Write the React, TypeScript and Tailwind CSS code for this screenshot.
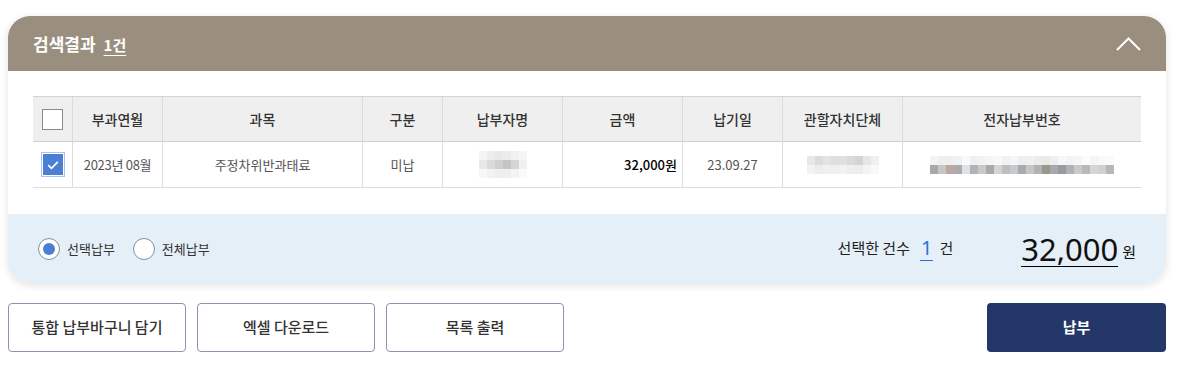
const cols = "grid grid-cols-[39px_90px_200px_80px_120px_120px_100px_120px_239px]";

const headers = ["부과연월", "과목", "구분", "납부자명", "금액", "납기일", "관할자치단체", "전자납부번호"];

// pixelated blur, like the masked personal data in the screenshot
function Masked({ rows }: { rows: string[][] }) {
    return (
        <div className="flex flex-col blur-[0.6px]">
            {rows.map((r, i) => (
                <div key={i} className="flex">
                    {r.map((c, j) => (
                        <div key={j} className="w-[8px] h-[9px]" style={{ background: c }} />
                    ))}
                </div>
            ))}
        </div>
    );
}

const nameMask = [
    ["#f4f4f5", "#ededee", "#e9e9ea", "#ececed", "#f1f1f2", "#f6f6f7"],
    ["#e8e8e9", "#dadadb", "#cfcfd0", "#c6c3c1", "#d6d6d8", "#eef0f2"],
    ["#f7f7f7", "#f2f2f3", "#eeeeee", "#efefef", "#f4f4f5", "#fafafa"],
];

const orgMask = [
    ["#e8e8ea", "#dcdcde", "#e4e4e6", "#dedee0", "#e2e0df", "#dadadb", "#d4d4d6", "#e6e6e8", "#f0f0f1"],
    ["#f3f3f4", "#eeeef0", "#f1f1f2", "#efefef", "#f2f2f3", "#eeeeef", "#ededee", "#f4f4f5", "#f8f8f8"],
];

const numMask = [
    ["#f3f3f4", "#efeff0", "#eeeeef", "#f1f1f2", "#fafafa", "#eff0f1", "#f2f2f3", "#f5f5f6", "#f7f8f8", "#f1f1f2", "#f5f5f5", "#eeeeef", "#f0f0f0", "#ececed", "#e9e9ea", "#eeeeef", "#f7f7f7", "#f3f3f4", "#f6f6f6", "#fbfbfb", "#f5f5f6", "#f9f9f9", "#fbfbfb"],
    ["#a9a8a9", "#c9c5c5", "#bba8a3", "#acaaab", "#dee2e4", "#b1b4b6", "#cdc8c7", "#a7a9ad", "#d8d3d0", "#bcbec0", "#c4cbce", "#a9acae", "#cac5c2", "#b0b2b3", "#98998e", "#a7aaad", "#999b9f", "#b0b3b5", "#c7c9cb", "#b9b9ba", "#d5d6d7", "#cfd0d1", "#b7b7b8"],
];

export default function App() {
    return (
        <div className="w-[1187px] h-[367px] bg-white font-['Noto_Sans_CJK_KR','Noto_Sans',sans-serif] text-[#333]">
            <div className="ml-2 pt-4 w-[1158px]">
                {/* Result card */}
                <div className="rounded-[22px] overflow-hidden shadow-[0_2px_8px_rgba(0,0,0,0.12)] bg-white">
                    {/* Header */}
                    <div className="h-[55px] bg-[#9a8f7e] flex items-center justify-between pl-[25px] pr-[25px]">
                        <div className="flex items-baseline gap-2 text-white">
                            <span className="text-[17px] font-bold">검색결과</span>
                            <span className="text-[15px] font-bold underline underline-offset-[4px]">1건</span>
                        </div>
                        <svg viewBox="0 0 25 14" className="w-[25px] h-[14px]">
                            <path d="M1 13 L12.5 1.5 L24 13" fill="none" stroke="white" strokeWidth="2" />
                        </svg>
                    </div>

                    {/* Table */}
                    <div className="px-[25px] pt-[25px] pb-[26px]">
                        <div className="border-t border-[#d2d2d2]">
                            <div className={`${cols} h-[45px] bg-[#efefef] border-b border-[#cfcfcf] text-[14px] font-medium text-[#333]`}>
                                <div className="flex items-center justify-center">
                                    <div className="w-[21px] h-[21px] bg-white border border-[#8a8a8a]" />
                                </div>
                                {headers.map((h) => (
                                    <div key={h} className="flex items-center justify-center border-l border-[#dcdcdc]">
                                        {h}
                                    </div>
                                ))}
                            </div>
                            <div className={`${cols} h-[46px] border-b border-[#dcdcdc] text-[13px] text-[#555]`}>
                                <div className="flex items-center justify-center">
                                    <div className="w-[24px] h-[25px] border border-[#a9c4f0] p-[1px]">
                                        <div className="w-full h-full bg-[#4a7fd3] flex items-center justify-center">
                                            <svg viewBox="0 0 16 16" className="w-[14px] h-[14px]">
                                                <path d="M2.5 8.2 L6.3 11.8 L13.5 4.5" fill="none" stroke="white" strokeWidth="1.9" />
                                            </svg>
                                        </div>
                                    </div>
                                </div>
                                <div className="flex items-center justify-center border-l border-[#dcdcdc] tracking-[-0.3px]">2023년 08월</div>
                                <div className="flex items-center justify-center border-l border-[#dcdcdc]">주정차위반과태료</div>
                                <div className="flex items-center justify-center border-l border-[#dcdcdc]">미납</div>
                                <div className="flex items-center justify-center border-l border-[#dcdcdc]">
                                    <Masked rows={nameMask} />
                                </div>
                                <div className="flex items-center justify-end pr-[5px] border-l border-[#dcdcdc] text-black font-medium">32,000원</div>
                                <div className="flex items-center justify-center border-l border-[#dcdcdc]">23.09.27</div>
                                <div className="flex items-center justify-center border-l border-[#dcdcdc]">
                                    <Masked rows={orgMask} />
                                </div>
                                <div className="flex items-center justify-center border-l border-[#dcdcdc]">
                                    <Masked rows={numMask} />
                                </div>
                            </div>
                        </div>
                    </div>

                    {/* Summary */}
                    <div className="h-[69px] bg-[#e5eff8] flex items-center justify-between pl-[30px] pr-[30px]">
                        <div className="flex items-center text-[13px] text-[#333]">
                            <span className="w-[22px] h-[22px] rounded-full bg-white border border-[#8c8c8c] flex items-center justify-center">
                                <span className="w-[12px] h-[12px] rounded-full bg-[#4a7fd3]" />
                            </span>
                            <span className="ml-[7px]">선택납부</span>
                            <span className="ml-[18px] w-[22px] h-[22px] rounded-full bg-white border border-[#8c8c8c]" />
                            <span className="ml-[7px]">전체납부</span>
                        </div>
                        <div className="flex items-center">
                            <span className="text-[15px] text-[#222]">선택한 건수</span>
                            <span className="ml-[10px] text-[20px] leading-[24px] text-[#2a6fdb] border-b border-[#2a6fdb] px-[1px] font-['Noto_Sans',sans-serif]">1</span>
                            <span className="ml-[6px] text-[15px] text-[#222]">건</span>
                            <span className="ml-[68px] text-[31px] leading-[34px] text-[#111] border-b border-black mt-[2px] font-['Noto_Sans',sans-serif]">32,000</span>
                            <span className="ml-[4px] text-[15px] text-[#111] mt-[8px]">원</span>
                        </div>
                    </div>
                </div>

                {/* Buttons */}
                <div className="mt-[20px] flex items-center justify-between">
                    <div className="flex gap-[11px]">
                        {["통합 납부바구니 담기", "엑셀 다운로드", "목록 출력"].map((b) => (
                            <button
                                key={b}
                                className="w-[178px] h-[49px] rounded-[4px] border border-[#8b94ad] bg-white text-[15px] font-medium text-[#333]"
                            >
                                {b}
                            </button>
                        ))}
                    </div>
                    <button className="w-[179px] h-[49px] rounded-[4px] bg-[#243769] text-white text-[15px] font-bold">
                        납부
                    </button>
                </div>
            </div>
        </div>
    );
}
